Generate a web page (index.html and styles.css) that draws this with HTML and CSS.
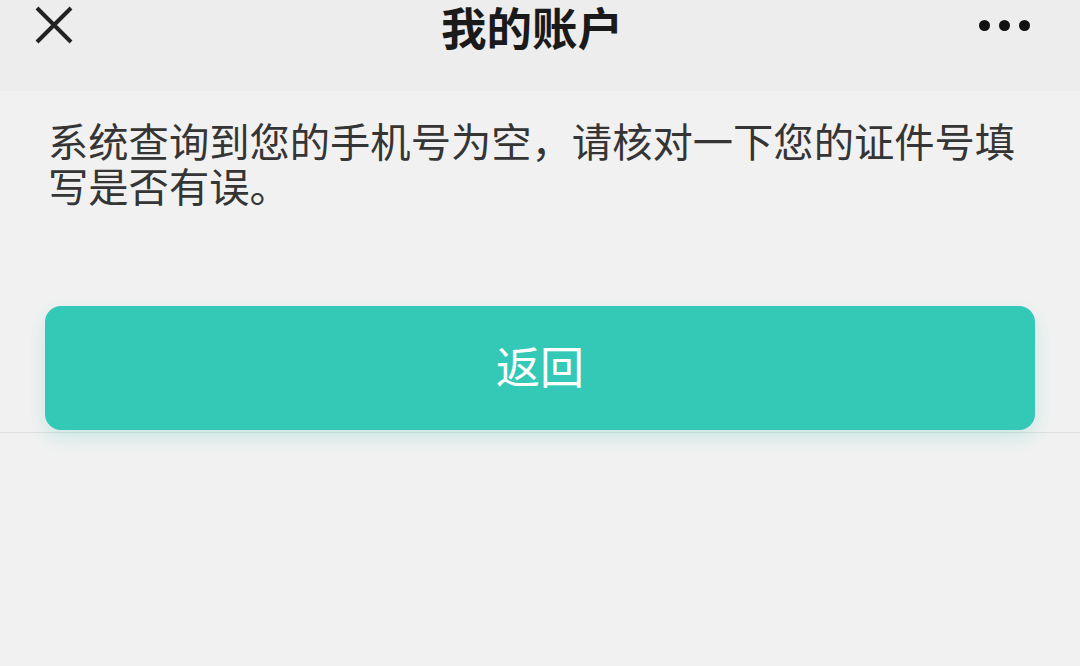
FILE: index.html
```html
<!DOCTYPE html>
<html lang="zh">
<head>
<meta charset="utf-8">
<title>我的账户</title>
<link rel="stylesheet" href="styles.css">
</head>
<body>
<header class="nav">
  <div class="nav-left">
    <svg class="icon-close" width="40" height="40" viewBox="0 0 40 40">
      <path d="M3 3 L37 37 M37 3 L3 37" stroke="#222" stroke-width="4" fill="none"/>
    </svg>
  </div>
  <h1 class="nav-title">我的账户</h1>
  <div class="nav-right">
    <span class="dot"></span><span class="dot"></span><span class="dot"></span>
  </div>
</header>
<main class="content">
  <section class="panel">
    <p class="msg">系统查询到您的手机号为空，请核对一下您的证件号填写是否有误。</p>
    <button class="btn">返回</button>
  </section>
</main>
</body>
</html>
```
FILE: styles.css
```css
* { box-sizing: border-box; }
html, body { margin: 0; padding: 0; }
body {
  width: 1080px;
  height: 666px;
  background: #f1f1f1;
  font-family: "Noto Sans CJK SC", "Noto Sans", sans-serif;
  overflow: hidden;
}
.nav {
  height: 91px;
  background: #ededed;
  display: flex;
  align-items: flex-start;
  justify-content: space-between;
  padding: 0 50px 0 34px;
}
.nav-left {
  padding-top: 5px;
  width: 120px;
}
.icon-close { display: block; }
.nav-title {
  margin: 3px 0 0 0;
  font-size: 45.5px;
  font-weight: 700;
  color: #1a1a1a;
  line-height: 46px;
}
.nav-right {
  width: 120px;
  display: flex;
  justify-content: flex-end;
  gap: 9px;
  padding-top: 20px;
}
.dot {
  width: 11px;
  height: 11px;
  border-radius: 50%;
  background: #111;
}
.content { display: flex; flex-direction: column; }
.panel {
  border-bottom: 1px solid #dedede;
  padding: 26px 45px 2px 45px;
}
.msg {
  margin: 0 0 0 3px;
  font-size: 40.3px;
  line-height: 45px;
  color: #353535;
  padding-right: 10px;
}
.btn {
  display: block;
  width: 990px;
  height: 124px;
  margin-top: 99px;
  border: none;
  border-radius: 16px;
  background: #33c9b6;
  color: #fff;
  font-family: inherit;
  font-size: 44px;
  font-weight: 400;
  line-height: 1;
  padding: 0 0 6px 0;
  box-shadow: 0 8px 18px rgba(51, 201, 182, 0.2);
}
```
